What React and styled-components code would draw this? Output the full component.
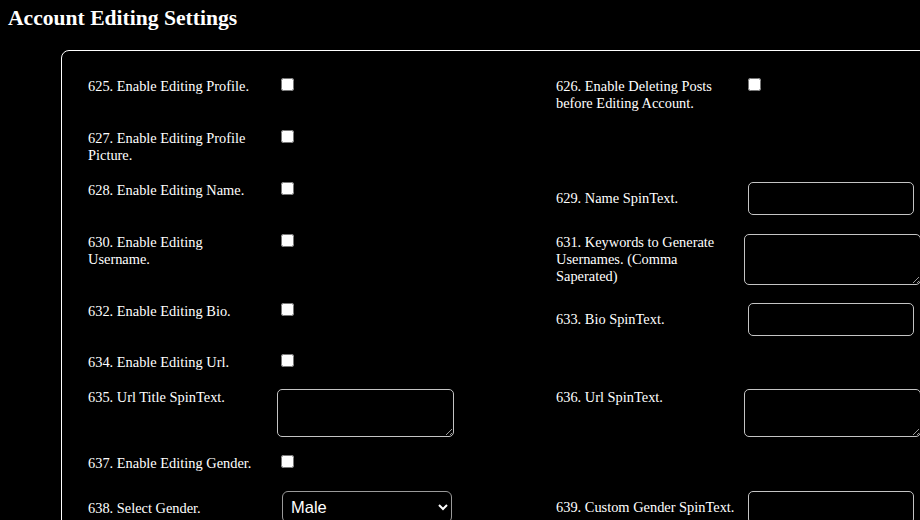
import styled, { createGlobalStyle } from "styled-components";

const GlobalStyle = createGlobalStyle`
  html, body {
    margin: 0;
    padding: 0;
    background: #000;
    overflow: hidden;
  }
  body {
    color: #fff;
    font-family: "Liberation Serif", "Times New Roman", serif;
    font-size: 14.4px;
  }
`;

const Page = styled.div`
  padding: 6px 8px 40px;
`;

const Title = styled.h2`
  margin: 0;
  font-size: 21.6px;
  font-weight: 700;
`;

const Panel = styled.section`
  margin: 19px 0 0 53px;
  width: 936px;
  padding: 27px 26px;
  border: 1px solid #fff;
  border-radius: 8px;
  display: grid;
  grid-template-columns: 468px 468px;
  row-gap: 18.2px;
  align-items: start;
`;

const Field = styled.div`
  display: flex;
  align-items: ${(p) => p.$align || "baseline"};
`;

const Label = styled.label`
  width: 180px;
  margin-right: ${(p) => (p.$right ? 8 : 9)}px;
  flex-shrink: 0;
  line-height: normal;
`;

const Check = styled.input.attrs({ type: "checkbox" })`
  width: 13px;
  height: 13px;
  margin: 0 0 0 4px;
`;

const TextInput = styled.input.attrs({ type: "text" })`
  box-sizing: border-box;
  width: 166px;
  height: 33px;
  margin-left: 4px;
  padding: 0 6px;
  background: #000;
  color: #fff;
  border: 1px solid #c4c4c4;
  border-radius: 5px;
  font-family: "Liberation Serif", serif;
  font-size: 14.4px;
`;

const TextArea = styled.textarea`
  box-sizing: border-box;
  width: 177px;
  height: ${(p) => p.$h || 48}px;
  margin: 0;
  padding: 2px 6px;
  background: #000;
  color: #fff;
  border: 1px solid #c4c4c4;
  border-radius: 5px;
  font-family: "Liberation Serif", serif;
  font-size: 14.4px;
`;

const Select = styled.select`
  box-sizing: border-box;
  width: 170px;
  height: 32px;
  margin-left: 5px;
  padding: 0 4px;
  background: #000;
  color: #fff;
  border: 1px solid #9a9a9a;
  border-radius: 6px;
  font-family: "Liberation Sans", Arial, sans-serif;
  font-size: 16.5px;
`;

const rows = [
  ["625. Enable Editing Profile.", "check"],
  ["626. Enable Deleting Posts before Editing Account.", "check"],
  ["627. Enable Editing Profile Picture.", "check"],
  null,
  ["628. Enable Editing Name.", "check"],
  ["629. Name SpinText.", "input"],
  ["630. Enable Editing Username.", "check"],
  ["631. Keywords to Generate Usernames. (Comma Saperated)", "area", 51],
  ["632. Enable Editing Bio.", "check"],
  ["633. Bio SpinText.", "input"],
  ["634. Enable Editing Url.", "check"],
  null,
  ["635. Url Title SpinText.", "area", 48],
  ["636. Url SpinText.", "area", 48],
  ["637. Enable Editing Gender.", "check"],
  null,
  ["638. Select Gender.", "select"],
  ["639. Custom Gender SpinText.", "input"],
];

function Control({ kind, h }) {
  if (kind === "check") return <Check />;
  if (kind === "input") return <TextInput />;
  if (kind === "area") return <TextArea $h={h} />;
  return (
    <Select defaultValue="Male">
      <option>Male</option>
      <option>Female</option>
      <option>Custom</option>
    </Select>
  );
}

export default function App() {
  return (
    <>
      <GlobalStyle />
      <Page>
        <Title>Account Editing Settings</Title>
        <Panel>
          {rows.map((r, i) =>
            r ? (
              <Field
                key={i}
                $align={r[1] === "check" || r[1] === "area" ? "flex-start" : "baseline"}
              >
                <Label $right={i % 2 === 1}>{r[0]}</Label>
                <Control kind={r[1]} h={r[2]} />
              </Field>
            ) : (
              <div key={i} />
            )
          )}
        </Panel>
      </Page>
    </>
  );
}
